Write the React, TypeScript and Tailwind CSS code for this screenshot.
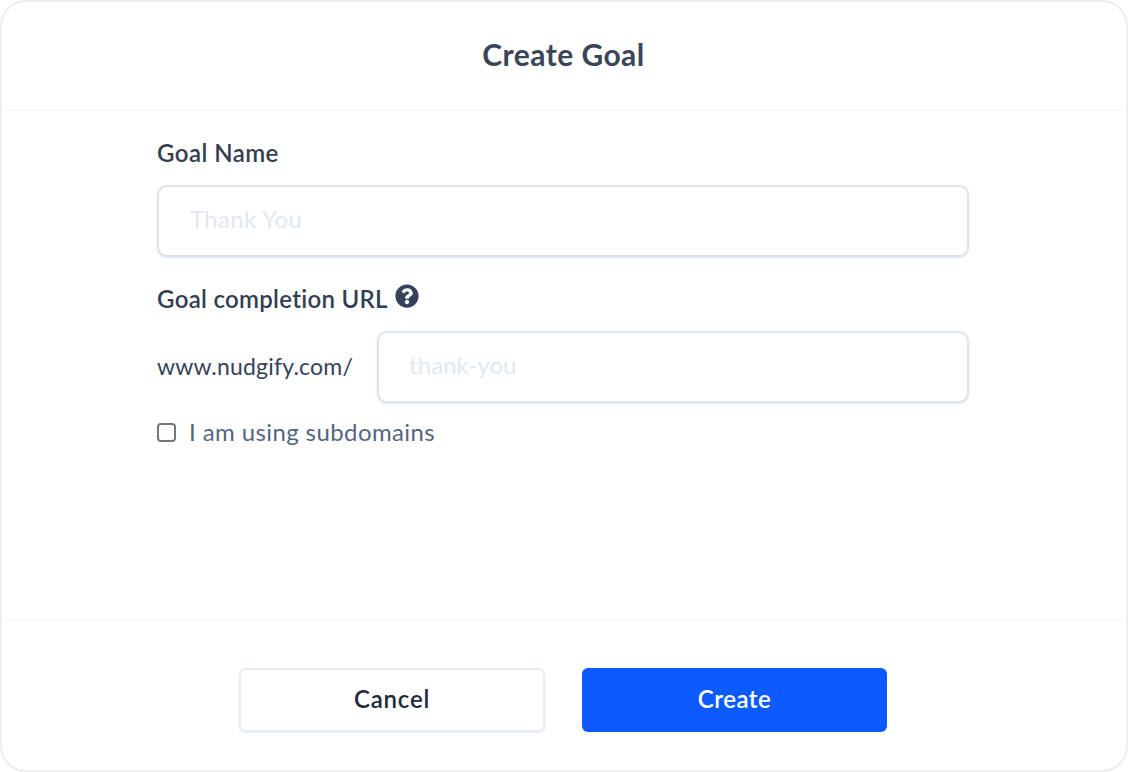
import { FaQuestionCircle } from "react-icons/fa";

const font = "font-['Lato','Liberation_Sans',sans-serif]";

export default function App() {
  return (
    <div className={`${font} w-[1128px] h-[772px] bg-white`}>
      <div className="w-full h-full flex flex-col rounded-[26px] border-2 border-[#eeeeee] bg-white overflow-hidden">
        <div className="h-[109px] shrink-0 flex items-center justify-center border-b border-[#f1f4f8]">
          <h1 className="text-[30px] font-bold text-[#3a4557] tracking-[0.45px] mt-[-3px] mr-[1px]">Create Goal</h1>
        </div>
        <div className="flex-1 px-[155px] pt-[26px]">
          <div className="w-[812px]">
            <label className="block text-[24px] leading-[32px] font-semibold text-[#333e52] tracking-[0.45px]">Goal Name</label>
            <input
              placeholder="Thank You"
              className="mt-[16px] block w-full h-[72px] px-[31px] pb-[6px] rounded-[10px] border-2 border-[#dde4ef] bg-white text-[24px] tracking-[0.3px] placeholder:text-[#e2e8f2] shadow-[0_1px_2px_rgba(190,205,225,0.5)] outline-none"
            />
            <div className="mt-[26px] flex items-center gap-[7px] h-[32px]">
              <span className="text-[24px] leading-[32px] font-semibold text-[#333e52] tracking-[0.3px]">Goal completion URL</span>
              <FaQuestionCircle className="w-[24px] h-[24px] text-[#36425a] mt-[-6px]" />
            </div>
            <div className="mt-[16px] flex items-center">
              <span className="w-[220px] shrink-0 text-[23px] text-[#36425a] tracking-[0.2px] mt-[-1px]">www.nudgify.com/</span>
              <input
                placeholder="thank-you"
                className="block flex-1 min-w-0 h-[72px] px-[30px] pb-[5px] rounded-[10px] border-2 border-[#dde4ef] bg-white text-[24px] tracking-[0.07px] placeholder:text-[#e2e8f2] shadow-[0_1px_2px_rgba(190,205,225,0.5)] outline-none"
              />
            </div>
            <label className="mt-[13px] flex items-center gap-[13px] h-[32px]">
              <span className="block w-[19px] h-[19px] mt-[1px] rounded-[4px] border-2 border-[#767676] bg-white" />
              <span className="text-[24px] leading-[32px] text-[#56657f] tracking-[0.4px]">I am using subdomains</span>
            </label>
          </div>
        </div>
        <div className="h-[151px] shrink-0 border-t border-[#f3f5f9] flex justify-center gap-[37px] pt-[48px] pr-[2px]">
          <button className="w-[306px] h-[64px] pb-[3px] rounded-[6px] border-2 border-[#e8ecf5] bg-white text-[24px] font-semibold text-[#1f2a3d] tracking-[0.8px] shadow-[0_1px_2px_rgba(190,205,225,0.4)]">
            Cancel
          </button>
          <button className="w-[305px] h-[64px] pb-[2px] rounded-[6px] bg-[#0d5bff] text-[24px] font-semibold text-white tracking-[0.5px]">
            Create
          </button>
        </div>
      </div>
    </div>
  );
}
